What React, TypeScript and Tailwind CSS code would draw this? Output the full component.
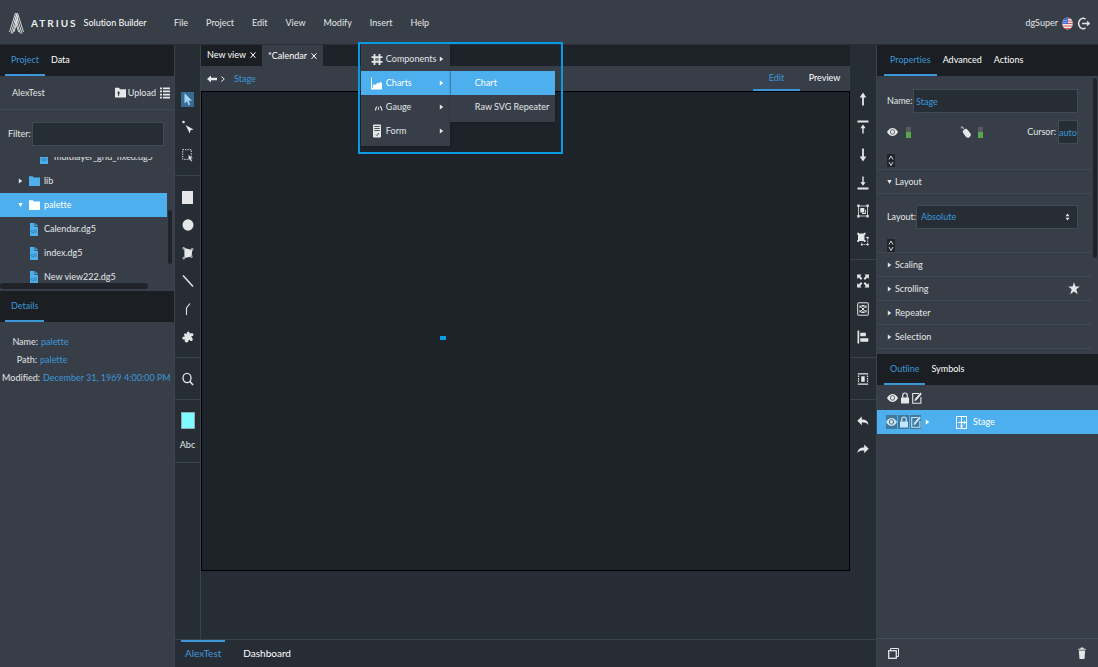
import React, { useState } from 'react';
import clsx from 'clsx';

/* ---------- icons, all drawn on a 12x14 grid unless noted ---------- */

const Icon: React.FC<{ children: React.ReactNode; w?: number; h?: number; className?: string }> = ({
  children, w = 12, h = 14, className,
}) => (
  <svg width={w} height={h} viewBox={`0 0 ${w} ${h}`} fill="currentColor" className={clsx('shrink-0', className)} aria-hidden="true">
    {children}
  </svg>
);

const PointerIcon = () => <Icon><path d="M2.500 1v10.500L5 9.300l1.500 4 1.600-.8L6.600 8.800H10z" /></Icon>;
const NodePointerIcon = () => <Icon><circle cx="1.500" cy="2" r="1.300" /><path d="M3.500 5 11.500 9.500 8.500 10.300 7.800 13.500z" /></Icon>;
const MarqueeIcon = () => (
  <Icon>
    <rect x=".7" y="1.700" width="8.600" height="9.600" fill="none" stroke="currentColor" strokeWidth="1" strokeDasharray="1.300 1.100" />
    <path d="M6.300 6.500v6l1.300-1.300 1.500 2.500 1.300-.7-1.300-2.500h2.200z" stroke="#272d35" strokeWidth=".5" />
  </Icon>
);
const RectIcon = () => <Icon><rect y="1" width="11" height="13" /></Icon>;
const EllipseIcon = () => <Icon><ellipse cx="6" cy="7" rx="5.500" ry="5.800" /></Icon>;
const PolyIcon = () => (
  <Icon>
    <path d="M2.300 2 10.300 4 9.500 10.500 2.500 12z" />
    <path d="M1 1.500h1.400v1.700H1zM9.500 2.500h1.400v1.700H9.500zM8.700 9.700h1.400v1.700H8.700zM1 11.300h1.400V13H1z" fill="#272d35" stroke="currentColor" strokeWidth=".7" />
  </Icon>
);
const LineIcon = () => <Icon><path d="M1 1.500 11 12.500" stroke="currentColor" strokeWidth="1.500" /></Icon>;
const PathIcon = () => <Icon><path d="M8 1.500 4.500 6 4.500 13" fill="none" stroke="currentColor" strokeWidth="1.100" /></Icon>;
const BlobIcon = () => (
  <Icon><path d="M5 2.200c1-1.400 3-.6 2.500 1.500 1.500-.6 4-.6 4 1 0 1.300-1.500 1.500-2.400 1.800 1 1.200 2.400 3 1.200 4.200-1.200 1-2.400-.2-3.200-1.200-.7 1-.9 3-2.800 3-1.900-.2-1.800-1.800-1.400-3C1.500 9.700.3 9.500.3 8c.1-1.400 1.700-1.500 2.700-1.600C2.300 5.500 1.500 4.200 2.600 3.400 3.700 2.800 4.400 4 4.600 4.200z" /></Icon>
);
const SearchIcon = () => (
  <Icon><g fill="none" stroke="currentColor"><ellipse cx="5" cy="6" rx="4" ry="4.700" strokeWidth="1.300" /><path d="m8 9.500 3 3.500" strokeWidth="1.600" /></g></Icon>
);
const SwatchIcon = () => <Icon w={14} h={17}><rect x=".5" y=".5" width="13" height="16" fill="#7ffbff" stroke="#a9b8bd" strokeWidth=".7" /></Icon>;

const UpIcon = () => <Icon><path d="M6 .5 9.300 5.500H6.900V13.500H5.100V5.500H2.700z" /></Icon>;
const TopIcon = () => <Icon><path d="M.5.500h11v2H.5zM6 4.500l2.600 3.700H6.700V13.500H5.300V8.200H3.400z" /></Icon>;
const DownIcon = () => <Icon><path d="M6 13.500 9.300 8.500H6.900V.5H5.100v8H2.700z" /></Icon>;
const BottomIcon = () => <Icon><path d="M.5 11.500h11v2H.5zM6 9.800l2.600-3.500H6.700V.5H5.300v5.800H3.400z" /></Icon>;
const GroupIcon = () => (
  <Icon>
    <rect x="1.500" y="2" width="9" height="10" fill="none" stroke="currentColor" strokeWidth=".8" />
    <path d="M3.300 4h4v4.500h-4z" />
    <path d="M8 5.700h.8V10H5v-.9h3z" />
    <path d="M.3.500h2.200v2.500H.3zM9.500.5h2.200v2.500H9.500zM.3 11h2.200v2.500H.3zM9.500 11h2.200v2.500H9.500z" />
  </Icon>
);
const UngroupIcon = () => (
  <Icon>
    <path d="M1 1.500h6.500v7.500H1zM.3.800h1.700v1.900H.3zM6.800.8h1.700v1.900H6.800zM.3 8h1.700v1.900H.3zM6.800 8h1.700v1.900H6.800z" />
    <path d="M9 5.500h1.700v7h-6V10.500" fill="none" stroke="currentColor" strokeWidth=".8" strokeDasharray="1.500 .8" />
    <path d="M9.900 4.700h1.700v1.800H9.900zM9.900 11.700h1.700v1.800H9.900zM3.900 11.700h1.700v1.800H3.900z" />
  </Icon>
);
const ExpandIcon = () => (
  <Icon>
    <path d="M0 .5h4.500L3.200 2 5.300 4.400 4 5.900 1.800 3.500.3 5zM12 .5H7.500L8.800 2 6.700 4.400 8 5.900l2.200-2.400L11.700 5zM0 13.500h4.500L3.200 12l2.100-2.400L4 8.100l-2.200 2.400L.3 9zM12 13.500H7.500L8.800 12 6.700 9.600 8 8.100l2.200 2.400L11.700 9z" />
  </Icon>
);
const FitIcon = () => (
  <Icon>
    <rect x=".7" y=".8" width="10.600" height="12.400" rx=".5" fill="none" stroke="currentColor" />
    <path d="M3 3.500 9 10.500M9 3.500 3 10.500" stroke="currentColor" strokeWidth="1" />
    <path d="M2.500 3.500v2.700L4.300 5zM9.500 3.500v2.700L7.700 5zM2.500 10.500V7.800L4.300 9zM9.500 10.500V7.800L7.700 9zM3.800 3h4.400L6 5zM3.800 11h4.400L6 9z" />
  </Icon>
);
const AlignLeftIcon = () => <Icon><path d="M.5.500h1.700v13H.5zM3.300 2.800h5.500v3.500H3.300zM3.300 8.200h8v3.500h-8z" /></Icon>;
const DistributeIcon = () => (
  <Icon>
    <path d="M4.300 4.200h3.400v5.600H4.300zM.8 1.200h10.400v1.200H.8zM.8 11.600h10.400v1.200H.8z" />
    <path d="M1.500 3.500v7.500M10.500 3.500v7.500" stroke="currentColor" strokeWidth="1.200" strokeDasharray="1.500 .9" />
  </Icon>
);
const UndoIcon = () => <Icon><path d="M4.800 2.500v3c4 0 6.300 1.500 6.700 5.500C10.300 9 8.200 8.500 4.800 8.500v2.700L.3 6.800z" /></Icon>;
const RedoIcon = () => <Icon><path d="M7.200 2.500v3C3.200 5.500.9 7 .5 11 1.700 9 3.800 8.500 7.200 8.500v2.700l4.500-4.400z" /></Icon>;

const FolderIcon = () => <Icon w={11} h={10}><path d="M0 .3h3.800l1 1.300H11V10H0z" /></Icon>;
const FileIcon = () => (
  <Icon w={8} h={13}>
    <path d="M0 0h4.600v3.800H8V13H0zM5.400.2 7.900 3H5.400z" />
    <path d="M2.500 7 1.400 8.500l1.100 1.500M5.500 7l1.100 1.500L5.500 10M4.400 6.700l-.9 3.600" fill="none" stroke="#27618c" strokeWidth=".7" />
  </Icon>
);
const CaretIcon = ({ open = false }: { open?: boolean }) => (
  <Icon w={5} h={6}>{open ? <path d="M.3 1h4.400L2.500 5z" /> : <path d="M.8.500v5L4.300 3z" />}</Icon>
);
const CloseIcon = () => <Icon w={6} h={8}><path d="m.5 1.300 5 5.600M5.500 1.300l-5 5.600" stroke="currentColor" /></Icon>;
const EyeIcon = () => (
  <Icon w={11} h={10}>
    <path d="M0 5C3-.300 8-.300 11 5 8 10.200 3 10.200 0 5z" />
    <ellipse cx="5.500" cy="4.900" rx="2.100" ry="2.300" fill="none" stroke="#515961" strokeWidth=".9" />
  </Icon>
);
const LockIcon = () => (
  <Icon w={8} h={12}>
    <rect y="5.500" width="8" height="6" rx=".6" />
    <path d="M1.700 6V3.500Q1.700 1 4 1t2.300 2.500V6" fill="none" stroke="currentColor" strokeWidth="1.200" />
  </Icon>
);
const EditIcon = () => (
  <Icon w={10} h={12}>
    <path d="M7 1.500H.7v9.700h8.200V5" fill="none" stroke="currentColor" strokeWidth="1.100" />
    <path d="m2.500 9.300.5-2.500L8.500.600l1.300 1.300L4.500 8.300z" />
  </Icon>
);
const StageIcon = () => (
  <Icon w={11} h={13}>
    <rect x=".5" y=".5" width="10" height="12" fill="none" stroke="currentColor" />
    <path d="M2 6.500h7.500M5.500 1v10.500" stroke="currentColor" />
    <path d="M7.800 4.500 10 6.500 7.800 8.500zM3.800 9.500 5.500 12l1.700-2.500z" />
  </Icon>
);
const SpinIcon = () => (
  <Icon w={8} h={13} className="bg-[#20252b]">
    <path d="M2 5.500 4 2l2 3.500M2 8l2 3.500L6 8" fill="none" stroke="currentColor" strokeWidth=".9" />
  </Icon>
);
const UploadIcon = () => (
  <Icon w={11} h={11}>
    <path d="M0 .8h4l1 1.500h6V10.500H0z" />
    <path d="M3.600 4 2 6.200h1v2.500h1.200V6.200h1z" fill="#373e47" />
  </Icon>
);
const ListIcon = () => (
  <Icon w={10} h={12}>
    <path d="M0 .5h2v1.700H0zM3 .5h7v1.700H3zM0 3.600h2v1.700H0zM3 3.600h7v1.700H3zM0 6.700h2v1.700H0zM3 6.700h7v1.700H3zM0 9.800h2v1.700H0zM3 9.800h7v1.700H3z" />
  </Icon>
);
const TagIcon = () => (
  <Icon w={12} h={14}>
    <rect x="4" y="3.700" width="5.600" height="9.300" rx="2.500" transform="rotate(-38 6.800 8.300)" />
    <path d="M.8 2.800h3M1.300 1l2.500 3" stroke="currentColor" strokeWidth="1" opacity=".7" />
  </Icon>
);
const LedIcon = () => <Icon w={5} h={11}><path fill="#555a5c" d="M0 0h5v5H0z" /><path fill="#5aa84c" d="M0 5h5v6H0z" /></Icon>;
const StarIcon = () => <Icon w={12} h={13}><path d="m6 .3 1.500 4.200h4.300L8.300 7.300l1.400 5L6 9.500l-3.700 2.800 1.400-5L.2 4.500h4.300z" /></Icon>;
const CopyIcon = () => (
  <Icon w={11} h={11}>
    <path d="M2.500 2.500v-2h8v8h-2" fill="none" stroke="currentColor" />
    <rect x=".7" y="2.700" width="7.600" height="7.600" fill="none" stroke="currentColor" strokeWidth="1.300" />
  </Icon>
);
const TrashIcon = () => <Icon w={8} h={12}><path d="M.3 1.800h2L2.800.6h2.400l.5 1.200h2v1H.3zM.8 3.600h6.400L6.500 12h-5z" /></Icon>;

const HashIcon = () => (
  <Icon w={12} h={13}>
    <path d="M3.500 1v11M8.500 1v11M.5 4.200h11M.5 8.800h11" stroke="currentColor" strokeWidth="1.800" />
    <path d="M4.500 5.200h3v2.600h-3z" opacity=".4" />
  </Icon>
);
const ChartIcon = () => <Icon w={12} h={13}><path d="M0 .5h.9V12H11V6.500L9.500 4.500 8 6.500 6.500 5.500 4.500 8 3 7 1.800 8.500V12H0z" /><path d="M0 11h11v1.500H0z" /></Icon>;
const GaugeIcon = () => (
  <Icon w={12} h={13}>
    <path d="M4.500 9.500Q4.500 7 6 5.800M9 5.200q1.700 1.300 2 4.300" fill="none" stroke="currentColor" strokeWidth="1.200" />
    <path d="M6.700 8.700 8 4.500v4.300z" />
  </Icon>
);
const FormIcon = () => (
  <Icon w={12} h={14}>
    <rect x="2" y=".5" width="8" height="13" rx=".8" />
    <path d="M3.300 2.500h5.400M3.300 4.500h5.400M3.300 6.500h5.400M5 10.500l1 1L8 9" stroke="#373e47" strokeWidth=".9" fill="none" />
  </Icon>
);

const AtriusLogo = () => (
  <svg width="15" height="23" viewBox="0 0 15 23" fill="none" stroke="#e8eaec" strokeWidth=".9" aria-hidden="true">
    <path d="M6.500 1 .5 20M8 1 2 21.500M9 3 3.500 21.500M9 6.500 5 20" />
    <path d="m8.500 1 6 19M7 2l6 19.500M6 4.500l5.300 17M5.700 8l4 12" />
  </svg>
);
const FlagIcon = () => (
  <svg width="11" height="13" viewBox="0 0 11 13" aria-hidden="true">
    <clipPath id="flag"><ellipse cx="5.500" cy="6.500" rx="5.300" ry="6" /></clipPath>
    <g clipPath="url(#flag)">
      <path fill="#f1e9e9" d="M0 0h11v13H0z" />
      <path stroke="#e0524f" strokeWidth="1.200" d="M0 1.500h11M0 4h11M0 6.500h11M0 9h11M0 11.500h11" />
      <path fill="#3f6fd0" d="M0 0h6v7H0z" />
      <path fill="#b9cdf2" d="M1.500 3h1v1h-1zM3.500 3h1v1h-1zM1.500 5h1v1h-1zM3.500 5h1v1h-1z" />
    </g>
  </svg>
);
const LogoutIcon = () => (
  <svg width="13" height="13" viewBox="0 0 13 13" fill="none" stroke="#dfe2e5" strokeWidth="1.500" aria-hidden="true">
    <path d="M8.500 2.200A4.300 5.200 0 1 0 8.500 10.800M5 6.500h7M10 4.500l2.200 2-2.200 2" />
  </svg>
);

/* ---------- shared pieces ---------- */

const Tab: React.FC<{ label: string; active?: boolean; onClick?: () => void }> = ({ label, active, onClick }) => (
  <button
    onClick={onClick}
    className={clsx('h-full border-b-2 px-1.5', active ? 'border-[#3c97d8] text-[#3c97d8]' : 'border-transparent text-white')}
  >
    {label}
  </button>
);

const TabBar: React.FC<{ tabs: string[]; className?: string }> = ({ tabs, className }) => {
  const [current, setCurrent] = useState(tabs[0]);
  return (
    <div className={clsx('flex h-[31px] shrink-0 bg-[#1b1e22]', className)}>
      {tabs.map(t => <Tab key={t} label={t} active={t === current} onClick={() => setCurrent(t)} />)}
    </div>
  );
};

interface Tool { name: string; icon: React.ReactNode; active?: boolean }

const ToolGroup: React.FC<{ tools: Tool[]; first?: boolean; last?: boolean }> = ({ tools, first, last }) => (
  <div className={clsx('flex flex-col items-center pb-1.5', first ? 'pt-10' : 'pt-[7px]', !last && 'border-b border-[#3a424b]')}>
    {tools.map(t => (
      <button key={t.name} aria-label={t.name} className="flex h-7 w-full items-center justify-center">
        <span className={clsx('flex h-[15px] w-[13px] items-center justify-center', t.active && 'bg-[#386c92] text-[#a5d5f5]')}>{t.icon}</span>
      </button>
    ))}
  </div>
);

const leftTools: Tool[][] = [
  [
    { name: 'Select', icon: <PointerIcon />, active: true },
    { name: 'Edit points', icon: <NodePointerIcon /> },
    { name: 'Marquee', icon: <MarqueeIcon /> },
  ],
  [
    { name: 'Rectangle', icon: <RectIcon /> },
    { name: 'Ellipse', icon: <EllipseIcon /> },
    { name: 'Polygon', icon: <PolyIcon /> },
    { name: 'Line', icon: <LineIcon /> },
    { name: 'Path', icon: <PathIcon /> },
    { name: 'Shape', icon: <BlobIcon /> },
  ],
  [{ name: 'Zoom', icon: <SearchIcon /> }],
];

const rightTools: Tool[][] = [
  [
    { name: 'Bring forward', icon: <UpIcon /> },
    { name: 'Bring to front', icon: <TopIcon /> },
    { name: 'Send backward', icon: <DownIcon /> },
    { name: 'Send to back', icon: <BottomIcon /> },
    { name: 'Group', icon: <GroupIcon /> },
    { name: 'Ungroup', icon: <UngroupIcon /> },
  ],
  [
    { name: 'Expand', icon: <ExpandIcon /> },
    { name: 'Fit', icon: <FitIcon /> },
    { name: 'Align', icon: <AlignLeftIcon /> },
  ],
  [{ name: 'Distribute', icon: <DistributeIcon /> }],
  [
    { name: 'Undo', icon: <UndoIcon /> },
    { name: 'Redo', icon: <RedoIcon /> },
  ],
];

/* ---------- header ---------- */

const insertItems = [
  { label: 'Components', icon: <HashIcon /> },
  { label: 'Charts', icon: <ChartIcon />, active: true },
  { label: 'Gauge', icon: <GaugeIcon /> },
  { label: 'Form', icon: <FormIcon /> },
];

const InsertMenu = () => (
  <div className="absolute -left-3 top-[27px] z-20 flex h-[112px] w-[205px] border-2 border-[#0a9be4] pl-px">
    <div className="h-[102px] w-[89px] shrink-0 bg-[#373e47] pt-[3px] shadow">
      {insertItems.map(item => (
        <button key={item.label} className={clsx('flex h-6 w-full items-center pl-2.5 pr-1.5', item.active && 'bg-[#4dafee] text-white')}>
          {item.icon}
          <span className="ml-[3px] flex-1 text-left">{item.label}</span>
          <CaretIcon />
        </button>
      ))}
    </div>
    <div className="mt-6 h-[54px] w-[105px] bg-[#373e47] py-[3px] shadow">
      <button className="flex h-6 w-full items-center border-l border-[#3c7ca6] bg-[#4dafee] pl-6 text-white">Chart</button>
      <button className="flex h-6 w-full items-center whitespace-nowrap pl-[25px]">Raw SVG Repeater</button>
    </div>
  </div>
);

const Header = () => (
  <header className="flex h-[45px] shrink-0 items-center border-b border-[#2a2f36] pl-[9px] pr-2 pt-0.5">
    <div className="flex w-[165px] shrink-0 items-center">
      <AtriusLogo />
      <span className="ml-[7px] text-[10px] font-bold tracking-[2px] text-[#eceef0]">ATRIUS</span>
      <span className="ml-1.5 whitespace-nowrap text-white">Solution Builder</span>
    </div>
    <nav className="flex gap-[18px]">
      {['File', 'Project', 'Edit', 'View', 'Modify'].map(m => <button key={m}>{m}</button>)}
      <div className="relative">
        <button>Insert</button>
        <InsertMenu />
      </div>
      <button>Help</button>
    </nav>
    <div className="ml-auto flex items-center gap-1">
      <span>dgSuper</span>
      <FlagIcon />
      <button aria-label="Log out"><LogoutIcon /></button>
    </div>
  </header>
);

/* ---------- left panel ---------- */

const ProjectPanel = () => (
  <aside className="flex w-[174px] shrink-0 flex-col">
    <TabBar tabs={['Project', 'Data']} className="pl-[5px]" />
    <div className="flex h-[34px] shrink-0 items-center border-b border-[#414952] pl-3 pr-1">
      <span className="flex-1">AlexTest</span>
      <button className="flex items-center gap-0.5"><UploadIcon />Upload</button>
      <button aria-label="List" className="ml-1"><ListIcon /></button>
    </div>
    <div className="flex h-[47px] shrink-0 items-center pl-2">
      <label htmlFor="filter" className="w-6">Filter:</label>
      <input id="filter" className="h-6 w-[132px] border border-[#424a53] bg-[#272d35] px-2 text-[#3c97d8] outline-none" />
    </div>

    <div className="relative h-[133px] shrink-0">
      <div className="h-[126px] overflow-hidden">
        <ul className="-mt-3 w-[167px]">
          <li className="flex h-6 items-center pl-10"><span className="text-[#4dafee]"><FileIcon /></span><span className="ml-1.5">multilayer_grid_fixed.dg5</span></li>
          <li className="flex h-6 items-center pl-[18px]"><CaretIcon /><span className="ml-1.5 text-[#4dafee]"><FolderIcon /></span><span className="ml-1">lib</span></li>
          <li className="flex h-6 items-center bg-[#4dafee] pl-[18px] text-white"><CaretIcon open /><span className="ml-1.5"><FolderIcon /></span><span className="ml-1">palette</span></li>
          {['Calendar.dg5', 'index.dg5', 'New view222.dg5'].map(f => (
            <li key={f} className="flex h-6 items-center pl-[30px]">
              <span className="text-[#4dafee]"><FileIcon /></span><span className="ml-1.5">{f}</span>
            </li>
          ))}
        </ul>
      </div>
      <div className="h-1.5 w-[148px] rounded-full bg-[#20242a]" />
      <div className="absolute right-0.5 top-[53px] h-[54px] w-1 rounded-full bg-[#20242a]" />
    </div>

    <TabBar tabs={['Details']} className="mt-px pl-[5px]" />
    <dl className="flex flex-col gap-0.5 pt-3">
      {[['Name:', 'palette', 'w-[38px]'], ['Path:', 'palette', 'w-[37px]'], ['Modified:', 'December 31, 1969 4:00:00 PM', 'w-10']].map(([k, v, w]) => (
        <div key={k} className="flex h-4 items-center gap-[3px] whitespace-nowrap">
          <dt className={clsx('text-right', w)}>{k}</dt>
          <dd className="text-[#3c97d8]">{v}</dd>
        </div>
      ))}
    </dl>
  </aside>
);

/* ---------- centre ---------- */

const Workspace = () => (
  <main className="flex min-w-0 flex-1 flex-col border-l border-[#3a424b] pb-[68px]">
    <div className="flex h-[21px] shrink-0 bg-[#1e2229] text-white">
      <button className="flex items-center gap-1 bg-[#1b1e22] px-1.5 pb-0.5">New view <CloseIcon /></button>
      <button className="flex items-center gap-1 bg-[#373e47] px-1.5">*Calendar <CloseIcon /></button>
    </div>
    <div className="flex h-[25px] shrink-0 items-center border-r border-[#3a424b] bg-[#373e47] pl-1.5">
      <button aria-label="Back" className="mr-1"><Icon w={10} h={8}><path d="M0 4 4 .5v2.300h6v2.400H4v2.300z" /></Icon></button>
      <Icon w={4} h={6}><path d="m.3.500 3 2.500-3 2.500" fill="none" stroke="currentColor" /></Icon>
      <a href="#stage" className="ml-[9px] text-[#3c97d8]">Stage</a>
      <div className="ml-auto flex h-full">
        <button className="w-[47px] border-b-2 border-[#3c97d8] text-[#3c97d8]">Edit</button>
        <button className="w-[49px] border-b-2 border-transparent text-white">Preview</button>
      </div>
    </div>
    <div id="stage" className="relative flex-1 border border-black bg-[#1e2229]">
      {/* the only node on the canvas */}
      <div className="absolute left-[238px] top-[244px] h-1 w-1.5 bg-[#0a9be4]" />
    </div>
  </main>
);

const Centre = () => (
  <div className="flex min-w-0 flex-1 flex-col border-x border-[#3a424b] bg-[#272d35]">
    <div className="flex min-h-0 flex-1">
      <div className="w-[25px] shrink-0">
        {leftTools.map((g, i) => <ToolGroup key={i} tools={g} first={i === 0} />)}
        <div className="flex flex-col items-center border-b border-[#3a424b] py-1.5">
          <button aria-label="Fill" className="flex h-7 items-center"><SwatchIcon /></button>
          <button className="h-[22px]">Abc</button>
        </div>
      </div>
      <Workspace />
      <div className="w-[26px] shrink-0">
        {rightTools.map((g, i) => <ToolGroup key={i} tools={g} first={i === 0} last={i === rightTools.length - 1} />)}
      </div>
    </div>
    <div className="flex h-7 shrink-0 border-t border-[#3a424b] pl-1.5 text-[10px]">
      <button className="border-t-2 border-[#3c97d8] px-1 pb-1 text-[#3c97d8]">AlexTest</button>
      <button className="ml-3 border-t-2 border-transparent px-1.5 pb-1 text-white">Dashboard</button>
    </div>
  </div>
);

/* ---------- right panel ---------- */

const Section: React.FC<{ title: string; open?: boolean; children?: React.ReactNode }> = ({ title, open, children }) => (
  <button className="flex h-6 w-full items-center border-b border-[#414952] pl-2.5 pr-3">
    <CaretIcon open={open} />
    <span className="ml-[3px] flex-1 text-left">{title}</span>
    {children}
  </button>
);

const PropertiesPanel = () => (
  <aside className="flex w-[221px] shrink-0 flex-col">
    <TabBar tabs={['Properties', 'Advanced', 'Actions']} className="pl-[7px]" />
    <div className="relative h-[278px] shrink-0">
      <div className="mr-1.5 overflow-hidden">
        <div className="flex h-[94px] flex-col border-b border-[#414952] pl-2.5 pr-3.5">
          <div className="flex h-[50px] items-center">
            <label htmlFor="name" className="w-[26px]">Name:</label>
            <input id="name" defaultValue="Stage" className="h-6 min-w-0 flex-1 border border-[#424a53] bg-[#272d35] px-0.5 text-[#3c97d8] outline-none" />
          </div>
          <div className="-mt-1.5 flex h-6 shrink-0 items-center">
            <EyeIcon />
            <span className="ml-2"><LedIcon /></span>
            <span className="ml-[49px]"><TagIcon /></span>
            <span className="ml-1.5"><LedIcon /></span>
            <label htmlFor="cursor" className="ml-auto mr-0.5">Cursor:</label>
            <input id="cursor" defaultValue="auto" className="h-6 w-5 border border-[#424a53] bg-[#272d35] text-center text-[#3c97d8] outline-none" />
          </div>
          <button aria-label="Resize rows" className="mb-0.5 mt-auto self-start"><SpinIcon /></button>
        </div>
        <Section title="Layout" open />
        <div className="flex h-[59px] flex-col border-b border-[#414952] pl-2.5 pr-3.5">
          <div className="flex h-[45px] shrink-0 items-center">
            <label htmlFor="layout" className="w-[29px]">Layout:</label>
            <div className="relative flex-1">
              <select id="layout" className="h-6 w-full appearance-none border border-[#424a53] bg-[#272d35] px-1 text-[#3c97d8] outline-none">
                <option>Absolute</option>
              </select>
              <span className="pointer-events-none absolute right-2 top-2"><Icon w={5} h={8}><path d="M.5 3.300 2.500.5l2 2.800zM.5 4.700h4L2.500 7.500z" /></Icon></span>
            </div>
          </div>
          <button aria-label="Resize rows" className="self-start"><SpinIcon /></button>
        </div>
        <Section title="Scaling" />
        <Section title="Scrolling"><StarIcon /></Section>
        <Section title="Repeater" />
        <Section title="Selection" />
      </div>
      <div className="absolute right-px top-0.5 h-[180px] w-1 rounded-full bg-[#20242a]" />
    </div>

    <TabBar tabs={['Outline', 'Symbols']} className="pl-[7px]" />
    <div className="flex h-[25px] shrink-0 items-center gap-[3px] pl-2.5">
      <EyeIcon /><LockIcon /><EditIcon />
    </div>
    <div className="flex h-6 shrink-0 items-center bg-[#4dafee] pl-[9px] text-white">
      <div className="flex gap-px text-[#c4e5fa]">
        <span className="flex h-3.5 w-[11px] items-center bg-[#41799c]"><EyeIcon /></span>
        <span className="flex h-3.5 w-[11px] items-center justify-center bg-[#41799c]"><LockIcon /></span>
        <span className="flex h-3.5 w-[11px] items-center justify-center bg-[#41799c]"><EditIcon /></span>
      </div>
      <span className="ml-1"><CaretIcon /></span>
      <span className="ml-[26px]"><StageIcon /></span>
      <span className="ml-1.5">Stage</span>
    </div>
    <div className="mt-auto flex h-[29px] shrink-0 items-center justify-between border-t border-[#434d57] pl-[11px] pr-3">
      <button aria-label="Duplicate"><CopyIcon /></button>
      <button aria-label="Delete"><TrashIcon /></button>
    </div>
  </aside>
);

export default function App() {
  return (
    <div className="flex h-screen min-h-[520px] flex-col bg-[#373e47] font-['Lato','Open_Sans',sans-serif] text-[9px] leading-4 text-[#e4e6e8] [font-variant-ligatures:none]">
      <Header />
      <div className="flex min-h-0 flex-1">
        <ProjectPanel />
        <Centre />
        <PropertiesPanel />
      </div>
    </div>
  );
}
